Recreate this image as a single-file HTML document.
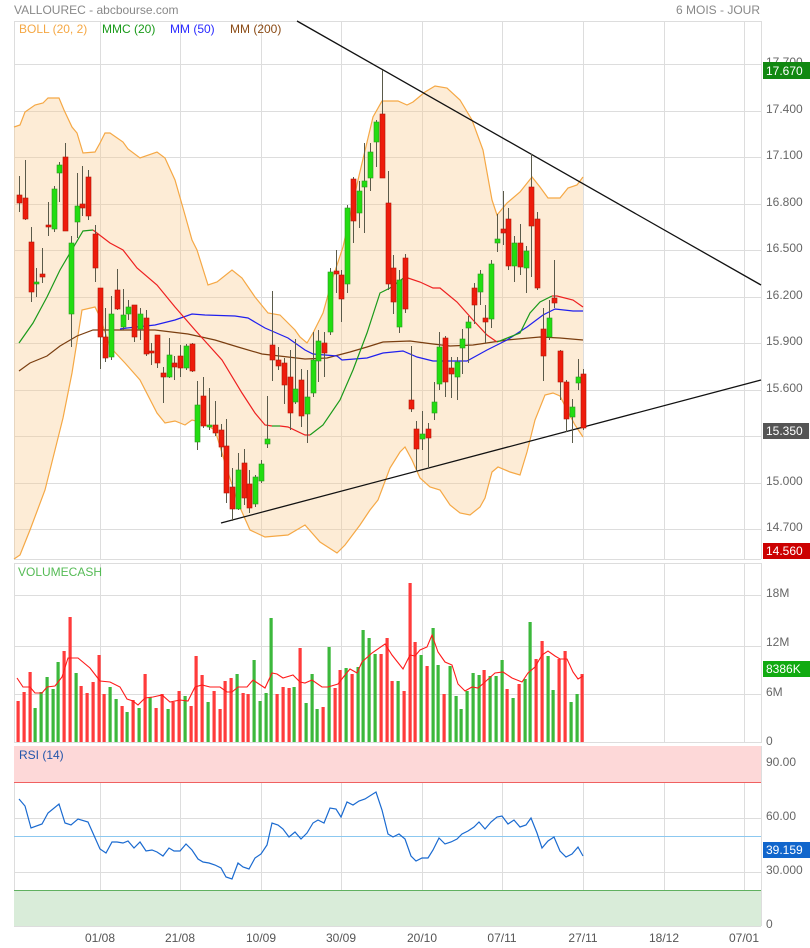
<!DOCTYPE html>
<html><head><meta charset="utf-8"><style>
html,body{margin:0;padding:0;background:#fff;}
svg{display:block;font-family:"Liberation Sans",sans-serif;}
</style></head><body>
<svg id="s" width="810" height="948" viewBox="0 0 810 948" xmlns="http://www.w3.org/2000/svg">
<rect width="810" height="948" fill="#fff"/>
<g id="grid" stroke="#dddddd" stroke-width="1" fill="none"></g>
<g id="rsiz"></g>
<g id="band"></g>
<g id="lines"></g>
<g id="cand"></g>
<g id="vol"></g>
<g id="txt" font-size="12" fill="#666">
<text x="14" y="14" fill="#888">VALLOUREC - abcbourse.com</text>
<text x="760" y="14" fill="#888" text-anchor="end">6 MOIS - JOUR</text>
<text x="19" y="33" fill="#f5a845">BOLL (20, 2)</text>
<text x="102" y="33" fill="#1a9a1a">MMC (20)</text>
<text x="170" y="33" fill="#2a2aff">MM (50)</text>
<text x="230" y="33" fill="#8a4a14">MM (200)</text>
<text x="18" y="576" fill="#55bb55">VOLUMECASH</text>
<text x="19" y="759" fill="#2255aa">RSI (14)</text>
<text x="766" y="66">17.700</text>
<text x="766" y="113">17.400</text>
<text x="766" y="159">17.100</text>
<text x="766" y="206">16.800</text>
<text x="766" y="252">16.500</text>
<text x="766" y="299">16.200</text>
<text x="766" y="345">15.900</text>
<text x="766" y="392">15.600</text>
<text x="766" y="485">15.000</text>
<text x="766" y="531">14.700</text>
<text x="766" y="597">18M</text>
<text x="766" y="646">12M</text>
<text x="766" y="696">6M</text>
<text x="766" y="745">0</text>
<text x="766" y="766">90.00</text>
<text x="766" y="820">60.00</text>
<text x="766" y="874">30.000</text>
<text x="766" y="928">0</text>
<g text-anchor="middle" fill="#555">
<text x="100" y="942">01/08</text><text x="180" y="942">21/08</text><text x="261" y="942">10/09</text>
<text x="341" y="942">30/09</text><text x="422" y="942">20/10</text><text x="502" y="942">07/11</text>
<text x="583" y="942">27/11</text><text x="664" y="942">18/12</text><text x="744" y="942">07/01</text>
</g>
<rect x="763" y="62" width="47" height="17" fill="#118811"/><text x="766" y="75" fill="#fff">17.670</text>
<rect x="763" y="423" width="46" height="16" fill="#555"/><text x="766" y="435" fill="#fff">15.350</text>
<rect x="763" y="543" width="47" height="16" fill="#cc0000"/><text x="766" y="555" fill="#fff">14.560</text>
<rect x="763" y="661" width="47" height="16" fill="#11aa11"/><text x="766" y="673" fill="#fff">8386K</text>
<rect x="763" y="842" width="47" height="16" fill="#1166cc"/><text x="766" y="854" fill="#fff">39.159</text>
</g>
</svg>
<script>
var NS="http://www.w3.org/2000/svg";
function add(p,tag,a){var e=document.createElementNS(NS,tag);for(var k in a)e.setAttribute(k,a[k]);document.getElementById(p).appendChild(e);return e;}
function pts(a){return a.map(function(p){return p[0]+","+p[1]}).join(" ");}
// RSI zones
add("rsiz","rect",{x:14,y:746,width:747,height:36,fill:"#fdd8d8"});
add("rsiz","rect",{x:14,y:890,width:747,height:36,fill:"#d9ecd9"});
// grid
var vx=[14,100,180,261,341,422,502,583,664,744,761];
[[21,559],[563,743],[746,926]].forEach(function(r){
 vx.forEach(function(x){add("grid","line",{x1:x+.5,y1:r[0],x2:x+.5,y2:r[1]});});
});
[21,64,111,157,204,250,297,343,390,436,483,529,559,563,595,646,694,742,746,764,818,872,926].forEach(function(y){
 add("grid","line",{x1:14,y1:y+.5,x2:761,y2:y+.5});
});
add("rsiz","line",{x1:14,y1:782.5,x2:761,y2:782.5,stroke:"#f06060","stroke-width":1});
add("rsiz","line",{x1:14,y1:890.5,x2:761,y2:890.5,stroke:"#60b060","stroke-width":1});
add("rsiz","line",{x1:14,y1:836.5,x2:761,y2:836.5,stroke:"#8cc8f0","stroke-width":1});
// bollinger
var up=[[14,127],[20,125],[25,112],[35,105],[43,103],[48,98],[59,98],[64,110],[72,127],[77,133],[83,153],[95,152],[100,143],[105,133],[110,133],[123,142],[128,149],[140,158],[157,152],[165,158],[175,180],[185,215],[192,240],[197,250],[208,285],[217,282],[232,270],[242,278],[255,297],[268,313],[280,315],[295,330],[300,337],[307,343],[313,333],[323,313],[333,277],[343,247],[358,180],[373,117],[382,101],[398,101],[407,105],[413,102],[425,92],[435,86],[447,88],[460,100],[472,120],[483,150],[492,200],[497,215],[507,203],[520,192],[532,177],[540,187],[548,198],[560,198],[568,188],[577,185],[583,177]];
var lo=[[14,559],[20,555],[30,530],[45,490],[63,418],[72,373],[82,310],[95,307],[100,317],[110,347],[125,363],[140,380],[157,413],[165,423],[175,421],[185,425],[192,420],[200,422],[215,430],[225,463],[238,503],[250,530],[265,537],[288,535],[305,525],[320,542],[337,553],[345,545],[360,525],[370,510],[378,500],[390,468],[400,452],[405,447],[412,460],[420,478],[430,487],[440,490],[450,505],[460,513],[470,515],[480,507],[485,498],[492,472],[498,467],[510,472],[520,475],[527,452],[535,420],[545,395],[553,393],[560,396],[567,410],[575,425],[583,437]];
add("band","polygon",{points:pts(up.concat(lo.slice().reverse())),fill:"#f8c88a","fill-opacity":"0.35"});
add("band","polyline",{points:pts(up),fill:"none",stroke:"#f5a845","stroke-width":1.2});
add("band","polyline",{points:pts(lo),fill:"none",stroke:"#f5a845","stroke-width":1.2});
// MMs
var m200=[[19,371],[30,363],[47,356],[60,346],[77,336],[93,330],[120,330],[155,330],[188,334],[215,340],[238,347],[262,354],[288,357],[305,359],[327,358],[350,352],[367,347],[383,342],[410,341],[433,344],[450,346],[473,345],[507,340],[540,337],[560,338],[583,340]];
add("lines","polyline",{points:pts(m200),fill:"none",stroke:"#7a3e10","stroke-width":1.2});
var m50=[[120,329],[127,328],[155,325],[175,320],[192,314],[205,315],[235,316],[248,318],[265,328],[288,338],[305,350],[313,354],[337,356],[342,360],[367,358],[383,353],[403,351],[417,357],[433,361],[467,361],[487,350],[507,340],[527,327],[543,315],[555,309],[573,311],[583,311]];
add("lines","polyline",{points:pts(m50),fill:"none",stroke:"#2020ee","stroke-width":1.2});
var segs=[
 ["#1a9a1a",[[19,343],[33,323],[47,297],[60,270],[70,253],[83,231],[93,230]]],
 ["#ee2020",[[93,230],[110,243],[123,250],[137,268],[157,285],[175,307],[195,330],[222,360],[242,393],[255,413],[265,425],[272,426]]],
 ["#1a9a1a",[[272,426],[280,426]]],
 ["#ee2020",[[280,426],[288,427],[305,435],[310,435]]],
 ["#1a9a1a",[[310,435],[323,425],[340,400],[353,370],[367,333],[380,293],[390,288],[405,277]]],
 ["#ee2020",[[405,277],[420,282],[433,288],[440,288],[457,302],[473,320],[487,335],[497,342]]],
 ["#1a9a1a",[[497,342],[520,333],[530,313],[540,302],[552,296]]],
 ["#ee2020",[[552,296],[557,296],[573,300],[583,307]]]];
segs.forEach(function(s){add("lines","polyline",{points:pts(s[1]),fill:"none",stroke:s[0],"stroke-width":1.2});});
// trend lines
add("lines","line",{x1:297,y1:21,x2:761,y2:285,stroke:"#111","stroke-width":1.3});
add("lines","line",{x1:221,y1:523,x2:761,y2:380,stroke:"#111","stroke-width":1.3});
// candles [x,hi,lo,top,bot,c]
var C=[[19,176,212,195,203,0],[25,160,220,198,219,0],[31,227,302,242,292,0],[36,268,297,282,284,1],[42,248,283,274,277,0],[48,202,236,225,227,0],[54,186,232,189,229,1],[59,162,202,165,173,1],[65,143,231,157,231,0],[71,236,347,243,314,1],[77,173,238,206,222,1],[82,166,216,204,208,0],[88,170,220,177,216,0],[95,225,282,234,268,0],[100,288,369,288,337,0],[105,308,362,337,358,0],[111,296,360,314,357,1],[117,269,310,290,309,0],[123,289,330,315,327,1],[128,300,320,307,314,1],[134,305,342,305,337,0],[140,308,340,314,329,1],[146,310,356,318,354,0],[151,343,365,351,353,0],[157,335,368,335,363,0],[163,367,403,373,377,0],[169,338,378,355,377,1],[174,356,380,363,367,0],[180,345,377,356,368,0],[186,344,370,346,368,1],[192,343,372,344,371,0],[197,381,450,405,442,1],[203,377,428,396,426,0],[209,388,430,425,427,1],[215,401,436,425,433,0],[221,424,457,430,447,0],[226,419,503,446,493,0],[232,468,521,487,509,0],[238,453,510,470,509,1],[244,449,505,463,498,0],[249,470,513,484,508,0],[255,475,507,477,504,1],[261,460,483,464,481,1],[267,396,448,439,444,1],[272,291,381,345,360,0],[278,347,370,360,366,0],[284,358,404,363,385,0],[290,350,430,377,413,0],[295,339,404,389,402,1],[301,369,427,380,416,0],[307,370,443,397,414,1],[313,332,397,360,393,1],[318,330,382,341,361,1],[324,332,377,343,353,0],[330,268,335,272,332,1],[336,250,293,271,274,0],[341,270,322,275,299,0],[347,205,293,208,284,1],[353,177,243,179,221,0],[359,181,228,191,213,1],[364,143,233,181,187,1],[370,143,191,152,178,1],[376,120,167,122,142,1],[382,70,178,114,178,0],[388,171,290,203,284,0],[393,255,314,268,302,0],[399,270,333,280,327,1],[405,254,313,258,309,0],[411,346,412,400,409,0],[416,421,472,429,449,0],[422,411,450,434,439,1],[428,423,467,429,438,0],[434,382,420,402,413,1],[439,332,390,347,384,1],[445,336,397,338,382,0],[451,357,398,368,374,0],[457,357,400,362,377,1],[462,329,374,339,348,1],[468,316,363,322,328,1],[474,283,324,288,305,0],[480,270,305,274,292,1],[485,305,343,318,322,0],[491,260,328,264,319,1],[497,214,252,239,243,1],[503,191,245,229,233,0],[508,208,270,219,266,0],[514,236,282,243,266,1],[520,224,275,243,267,0],[526,246,293,251,268,1],[531,154,277,187,226,0],[537,212,290,219,288,0],[543,308,381,329,356,0],[549,300,340,318,337,1],[554,260,308,298,303,0],[560,350,400,351,382,0],[566,380,432,382,419,0],[572,399,443,407,417,1],[578,359,390,377,383,1],[583,369,430,374,428,0]];
C.forEach(function(c){
 add("cand","line",{x1:c[0]+.5,y1:c[1],x2:c[0]+.5,y2:c[2],stroke:"#5a5a4a","stroke-width":1});
 var h=Math.max(c[4]-c[3],2);
 add("cand","rect",{x:c[0]-2,y:c[3],width:5,height:h,fill:c[5]?"#22dd11":"#ee1c0c",stroke:c[5]?"#2a9a20":"#b01808","stroke-width":0.6});
});
// volume
var V=[[18,701,0],[24,692,0],[30,672,0],[35,708,1],[41,692,1],[47,677,1],[53,689,1],[58,662,1],[64,651,0],[70,617,0],[76,673,1],[81,686,0],[87,693,0],[93,682,0],[99,655,0],[104,694,0],[110,687,1],[116,699,1],[122,706,0],[127,712,1],[133,700,0],[139,708,1],[145,674,0],[150,697,1],[156,708,0],[162,694,0],[168,709,1],[173,702,0],[179,691,0],[185,696,1],[191,706,0],[196,656,0],[202,675,0],[208,702,1],[214,691,0],[220,709,0],[225,681,0],[231,678,0],[237,674,1],[243,693,0],[248,694,0],[254,660,1],[260,701,1],[266,693,1],[271,618,1],[277,694,0],[283,687,0],[289,688,0],[294,687,1],[300,648,0],[306,703,1],[312,674,1],[317,709,1],[323,707,0],[329,647,1],[335,688,0],[340,670,0],[346,668,1],[352,674,0],[358,667,1],[363,630,1],[369,638,1],[375,654,1],[381,654,0],[387,638,0],[392,681,0],[398,681,1],[404,691,0],[410,583,0],[415,642,0],[421,655,1],[427,666,0],[433,628,1],[438,665,1],[444,694,0],[450,666,1],[456,696,1],[461,709,1],[467,691,1],[473,673,1],[479,675,1],[484,670,0],[490,676,1],[496,676,1],[502,660,1],[507,689,0],[513,698,1],[519,684,0],[525,679,1],[530,622,1],[536,659,0],[542,641,0],[548,656,1],[553,690,1],[559,659,0],[565,651,0],[571,702,1],[577,694,1],[582,674,0]];
V.forEach(function(v){add("vol","rect",{x:v[0]-1.5,y:v[1],width:3.2,height:742-v[1],fill:v[2]?"#3cb83c":"#ff3b3b"});});
var vm=[[17,678],[23,687],[30,687],[35,693],[42,693],[47,687],[55,686],[62,677],[68,658],[78,658],[90,668],[100,681],[110,682],[120,687],[127,699],[133,701],[138,705],[145,698],[153,697],[162,695],[170,702],[180,700],[188,701],[195,687],[202,685],[210,687],[220,687],[227,692],[232,692],[238,687],[247,687],[253,680],[265,688],[272,673],[277,674],[283,678],[293,675],[300,682],[305,683],[312,680],[322,687],[328,687],[338,684],[345,675],[350,669],[357,673],[362,662],[372,653],[385,644],[392,655],[403,669],[410,655],[415,656],[420,650],[427,647],[432,635],[438,652],[445,662],[452,665],[458,684],[465,691],[472,687],[478,688],[485,682],[495,673],[503,672],[512,678],[522,682],[528,673],[535,667],[542,655],[548,651],[555,656],[560,659],[567,659],[573,672],[578,679],[583,676]];
add("vol","polyline",{points:pts(vm),fill:"none",stroke:"#ff1a1a","stroke-width":1.1});
// RSI
var R=[[19,799],[25,806],[31,828],[42,824],[48,813],[59,804],[65,823],[71,825],[78,819],[88,822],[100,849],[106,853],[112,842],[117,842],[123,843],[128,841],[134,848],[140,842],[146,851],[152,850],[157,852],[163,856],[169,848],[174,851],[180,851],[186,844],[192,850],[198,859],[203,862],[209,863],[215,865],[221,868],[226,877],[232,879],[238,863],[243,867],[249,869],[255,858],[261,854],[267,845],[272,823],[278,825],[283,829],[289,837],[295,832],[301,839],[307,833],[313,823],[318,820],[324,823],[330,808],[336,809],[341,817],[347,802],[353,805],[359,801],[365,799],[376,792],[382,810],[388,834],[393,837],[399,834],[405,839],[411,856],[416,861],[422,858],[428,858],[433,850],[439,838],[445,844],[451,842],[457,839],[462,834],[468,831],[474,827],[479,822],[485,829],[491,822],[497,817],[502,816],[508,824],[514,820],[520,827],[526,825],[531,818],[537,833],[542,848],[548,841],[554,837],[560,851],[566,857],[572,854],[578,847],[583,856]];
add("vol","polyline",{points:pts(R),fill:"none",stroke:"#1a6ad0","stroke-width":1.2});
// bring text on top
var s=document.getElementById("s");s.appendChild(document.getElementById("txt"));
</script>
</body></html>
